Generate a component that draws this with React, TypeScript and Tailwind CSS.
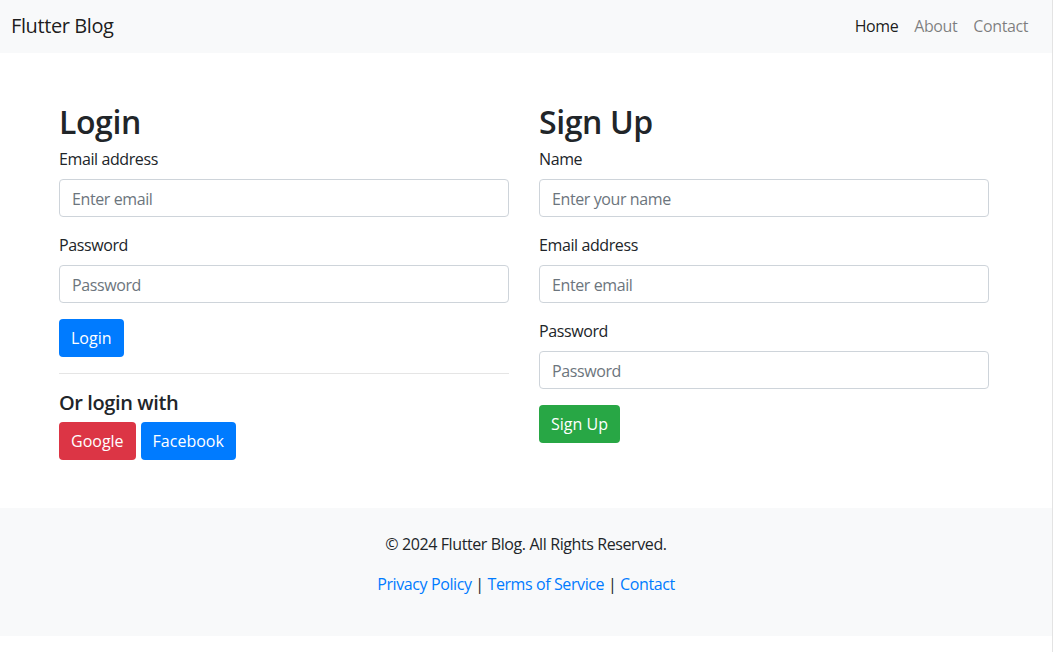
import React from "react";

const font = { fontFamily: '"Open Sans", "Noto Sans", sans-serif' };

const inputCls =
	"block w-full h-[38px] px-3 pt-[1px] border border-[#ced4da] rounded-[4px] bg-white text-base text-[#495057] placeholder:text-[#6c757d] outline-none tracking-[-0.025em]";

const Field = ({
	label,
	placeholder,
	type = "text",
}: {
	label: string;
	placeholder: string;
	type?: string;
}) => (
	<div className="mb-4">
		<label className="block mb-2 leading-6">{label}</label>
		<input type={type} placeholder={placeholder} className={inputCls} />
	</div>
);

const Btn = ({ children, color }: { children: React.ReactNode; color: string }) => (
	<button
		type="button"
		className={`h-[38px] px-3 rounded-[4px] text-white text-base leading-6 tracking-normal ${color}`}
	>
		{children}
	</button>
);

export default function App() {
	return (
		<div
			className="w-[1053px] min-h-[652px] border-r border-[#e3e3e3] bg-white text-[#212529] text-base tracking-[-0.025em]"
			style={font}
		>
			<nav className="h-[53px] bg-[#f8f9fa] flex flex-row items-center justify-between pl-[11px] pr-4">
				<a className="text-[20px] leading-[30px] text-[#000000e6] -mt-[1px]">Flutter Blog</a>
				<div className="flex flex-row items-center -mt-[1px]">
					<a className="px-2 leading-6 text-[#000000e6]">Home</a>
					<a className="px-2 leading-6 text-[#00000080]">About</a>
					<a className="px-2 leading-6 text-[#00000080]">Contact</a>
				</div>
			</nav>

			<main className="pt-12 pb-12 pl-[59px] flex flex-row gap-[30px]">
				<div className="w-[450px]">
					<h2 className="text-[32px] leading-[38px] font-semibold pt-[2px] mb-[6px]">Login</h2>
					<Field label="Email address" placeholder="Enter email" type="email" />
					<Field label="Password" placeholder="Password" type="password" />
					<Btn color="bg-[#007bff]">Login</Btn>
					<hr className="my-4 border-0 border-t border-[#0000001a]" />
					<h5 className="text-[20px] leading-6 font-semibold mb-2 pt-[1px]">Or login with</h5>
					<div className="flex flex-row gap-[5px] -mt-[1px]">
						<Btn color="bg-[#dc3545]">Google</Btn>
						<Btn color="bg-[#007bff]">Facebook</Btn>
					</div>
				</div>
				<div className="w-[450px]">
					<h2 className="text-[32px] leading-[38px] font-semibold pt-[2px] mb-[6px]">Sign Up</h2>
					<Field label="Name" placeholder="Enter your name" />
					<Field label="Email address" placeholder="Enter email" type="email" />
					<Field label="Password" placeholder="Password" type="password" />
					<Btn color="bg-[#28a745]">Sign Up</Btn>
				</div>
			</main>

			<footer className="bg-[#f8f9fa] py-6 text-center">
				<p className="leading-6 mb-4">© 2024 Flutter Blog. All Rights Reserved.</p>
				<p className="leading-6 mb-4">
					<a className="text-[#007bff]">Privacy Policy</a> |{" "}
					<a className="text-[#007bff]">Terms of Service</a> |{" "}
					<a className="text-[#007bff]">Contact</a>
				</p>
			</footer>
		</div>
	);
}
